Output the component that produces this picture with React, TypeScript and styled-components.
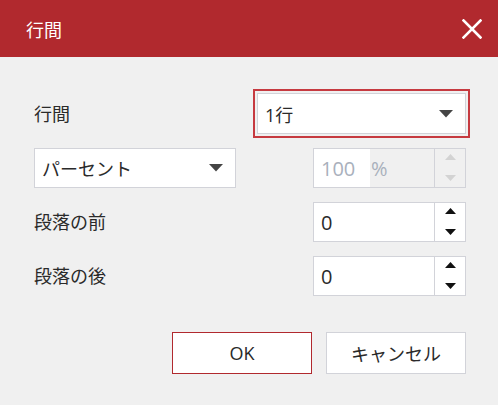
import React from "react";
import styled, {createGlobalStyle} from "styled-components";

const GlobalStyle = createGlobalStyle`
    html, body {
        margin: 0;
        padding: 0;
        background: #f0f0f0;
    }

    * {
        box-sizing: border-box;
    }
`;

const FONT = `"Open Sans", "Noto Sans CJK JP", sans-serif`;

const Caret = ({color = "#444"}: { color?: string }) => (
    <svg width="14" height="8" viewBox="0 0 14 8">
        <path d="M0 0H14L7 7.5Z" fill={color}/>
    </svg>
);

const Spinner = ({disabled}: { disabled?: boolean }) => (
    <SpinBox>
        <svg width="11" height="6" viewBox="0 0 11 6">
            <path d="M0 6H11L5.5 0Z" fill={disabled ? "#d3d3d3" : "#111"}/>
        </svg>
        <svg width="11" height="6" viewBox="0 0 11 6">
            <path d="M0 0H11L5.5 6Z" fill={disabled ? "#d3d3d3" : "#111"}/>
        </svg>
    </SpinBox>
);

const App = () => {
    return (
        <>
            <GlobalStyle/>
            <Dialog>
                <Header>
                    <Title>行間</Title>
                    <CloseButton aria-label="close">
                        <svg width="20" height="20" viewBox="0 0 20 20">
                            <path d="M1.5 1.5L18.5 18.5M18.5 1.5L1.5 18.5" stroke="#fff" strokeWidth="2.6"
                                  strokeLinecap="square"/>
                        </svg>
                    </CloseButton>
                </Header>
                <Body>
                    <Form>
                        <Row>
                            <Label>行間</Label>
                            <Select width={209} focused>
                                <span>1行</span>
                                <Caret/>
                            </Select>
                        </Row>
                        <Row>
                            <Select width={202}>
                                <span>パーセント</span>
                                <Caret/>
                            </Select>
                            <NumberBox disabled>
                                <NumberField disabled>
                                    <span>100</span>
                                </NumberField>
                                <Unit>%</Unit>
                                <Spinner disabled/>
                            </NumberBox>
                        </Row>
                        <Row>
                            <Label>段落の前</Label>
                            <NumberBox>
                                <NumberField>0</NumberField>
                                <Spinner/>
                            </NumberBox>
                        </Row>
                        <Row>
                            <Label>段落の後</Label>
                            <NumberBox>
                                <NumberField>0</NumberField>
                                <Spinner/>
                            </NumberBox>
                        </Row>
                    </Form>
                    <Footer>
                        <Button primary>OK</Button>
                        <Button>キャンセル</Button>
                    </Footer>
                </Body>
            </Dialog>
        </>
    );
};

const Dialog = styled.div`
    width: 498px;
    height: 405px;
    background: #f0f0f0;
    font-family: ${FONT};
    color: #2a2a2a;
    overflow: hidden;
`;

const Header = styled.div`
    height: 57px;
    background: #b1292e;
    display: flex;
    align-items: center;
    justify-content: space-between;
    padding: 0 16px 0 26px;
`;

const Title = styled.h1`
    margin: 0;
    font-size: 18px;
    font-weight: 400;
    color: #fff;
`;

const CloseButton = styled.button`
    border: none;
    background: none;
    padding: 0;
    width: 20px;
    height: 20px;
    margin-top: 1px;
    cursor: pointer;
    display: flex;
`;

const Body = styled.div`
    padding: 36px 32px 0 34px;
`;

const Form = styled.div`
    display: flex;
    flex-direction: column;
    gap: 14px;
`;

const Row = styled.div`
    display: flex;
    align-items: center;
    justify-content: space-between;
    height: 40px;

    &:first-child {
        height: 41px;
    }
`;

const Label = styled.span`
    font-size: 18px;
    line-height: 1;
`;

const Select = styled.div<{ width: number, focused?: boolean }>`
    width: ${({width}) => width}px;
    height: 100%;
    background: #fff;
    border: 1px solid #d2d3d9;
    display: flex;
    align-items: center;
    justify-content: space-between;
    padding: 0 12px 0 7px;
    font-size: 18px;
    outline: ${({focused}) => focused ? "2px solid #c63a40" : "none"};
    outline-offset: 2px;
`;

const NumberBox = styled.div<{ disabled?: boolean }>`
    width: 153px;
    height: 100%;
    display: flex;
    border: 1px solid #d2d3d9;
    background: ${({disabled}) => disabled ? "#f0f0f0" : "#fff"};
`;

const NumberField = styled.div<{ disabled?: boolean }>`
    display: flex;
    align-items: center;
    padding-left: 7px;
    font-size: 20px;
    background: #fff;
    color: ${({disabled}) => disabled ? "#a9b0bc" : "#2a2a2a"};
    width: ${({disabled}) => disabled ? "56px" : "auto"};
    flex: ${({disabled}) => disabled ? "none" : "1"};
`;

const Unit = styled.span`
    flex: 1;
    display: flex;
    align-items: center;
    padding-left: 1px;
    font-size: 20px;
    color: #a9b0bc;
`;

const SpinBox = styled.div`
    width: 31px;
    border-left: 1px solid #d2d3d9;
    display: flex;
    flex-direction: column;
    align-items: center;
    justify-content: space-between;
    padding: 5px 0 6px;
`;

const Footer = styled.div`
    display: flex;
    justify-content: flex-end;
    gap: 14px;
    margin-top: 36px;
`;

const Button = styled.button<{ primary?: boolean }>`
    width: 140px;
    height: 42px;
    background: #fff;
    border: 1px solid ${({primary}) => primary ? "#b1292e" : "#d2d3d9"};
    font-family: ${FONT};
    font-size: 18px;
    color: #2a2a2a;
    padding: 0;
    cursor: pointer;
`;

export default App;
